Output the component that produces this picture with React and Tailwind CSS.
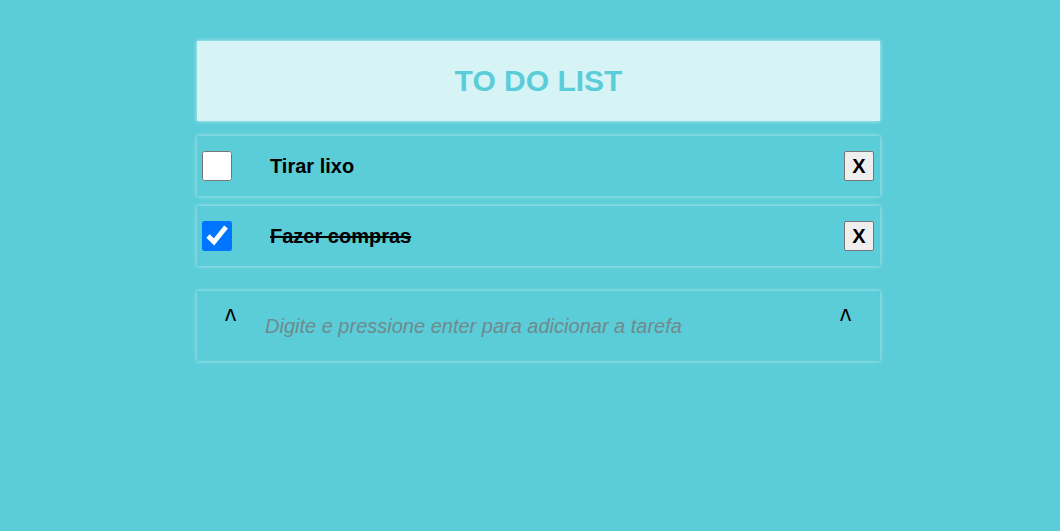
import React from "react";

export default function App() {
  const font = { fontFamily: '"Liberation Sans", Arial, sans-serif' };
  return (
    <div className="min-h-[531px] w-full bg-[#5bcdd8] pt-[41px]" style={font}>
      <div className="ml-[197px] w-[683px] flex flex-col">
        <div className="h-[80px] bg-[#d6f4f6] flex items-center justify-center shadow-[0_0_4px_rgba(255,255,255,0.7)]">
          <h1 className="text-[30px] font-bold text-[#5bcdd8] leading-none">TO DO LIST</h1>
        </div>

        <div className="mt-[15px] h-[60px] flex items-center px-[5px] shadow-[0_0_4px_rgba(255,255,255,0.6)]">
          <input type="checkbox" className="w-[30px] h-[30px] m-0 accent-[#0075ff]" />
          <span className="ml-[38px] text-[20px] font-bold text-black">Tirar lixo</span>
          <button className="ml-auto mr-[1px] w-[30px] h-[30px] bg-[#efefef] border border-[#767676] rounded-[2px] text-[20px] font-bold text-black leading-none flex items-center justify-center">
            X
          </button>
        </div>

        <div className="mt-[10px] h-[60px] flex items-center px-[5px] shadow-[0_0_4px_rgba(255,255,255,0.6)]">
          <input type="checkbox" defaultChecked className="w-[30px] h-[30px] m-0 accent-[#0075ff]" />
          <span className="ml-[38px] text-[20px] font-bold text-black line-through">Fazer compras</span>
          <button className="ml-auto mr-[1px] w-[30px] h-[30px] bg-[#efefef] border border-[#767676] rounded-[2px] text-[20px] font-bold text-black leading-none flex items-center justify-center">
            X
          </button>
        </div>

        <div className="mt-[25px] h-[70px] flex items-start shadow-[0_0_4px_rgba(255,255,255,0.6)]">
          <span className="ml-[28px] mt-[12px] w-[12px] text-[34px] text-black leading-none inline-block scale-x-[0.7] origin-left">^</span>
          <span className="ml-[28px] mt-[25px] text-[20px] italic text-[#6f8a8d] leading-none">
            Digite e pressione enter para adicionar a tarefa
          </span>
          <span className="ml-auto mr-[28px] mt-[12px] w-[12px] text-[34px] text-black leading-none inline-block scale-x-[0.7] origin-left">^</span>
        </div>
      </div>
    </div>
  );
}
